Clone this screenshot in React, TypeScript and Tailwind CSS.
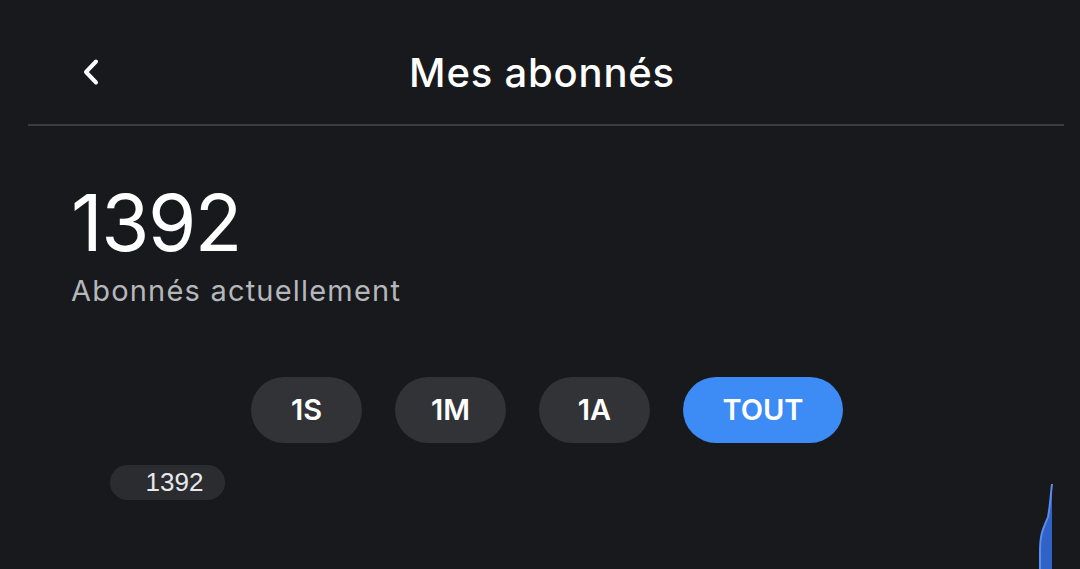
import React from 'react';

const ranges = ['1S', '1M', '1A', 'TOUT'];

export default function App() {
  const active = 'TOUT';
  return (
    <div className="w-[1080px] h-[569px] overflow-hidden bg-[#18191d] text-white font-['Inter',sans-serif] flex flex-col">
      <header className="relative h-[124px] flex items-center justify-center pt-[22px]">
        <button className="absolute left-[77px] top-[55px] w-[28px] h-[34px] flex items-center justify-center">
          <svg width="20" height="28" viewBox="0 0 20 28" fill="none">
            <path d="M15 3.5 L5 14 L15 24.5" stroke="white" strokeWidth="4" strokeLinecap="round" strokeLinejoin="round" />
          </svg>
        </button>
        <h1 className="text-[40px] font-medium tracking-[0.8px] ml-[4px]">Mes abonnés</h1>
      </header>
      <div className="ml-[28px] mr-[16px] h-[2px] bg-[#3a3b3f]" />

      <section className="pl-[71px] pt-[58px]">
        <div className="text-[78px] leading-none font-normal tracking-[-1.5px]">1392</div>
        <div className="mt-[14px] text-[29px] leading-none text-[#b5b7bb] tracking-[1.2px]">Abonnés actuellement</div>
      </section>

      <div className="mt-[72px] flex justify-center gap-[33px] pl-[14px]">
        {ranges.map((r) => (
          <button
            key={r}
            className={
              r === active
                ? 'h-[66px] w-[160px] rounded-full bg-[#3d8bf5] text-[29px] font-semibold text-white'
                : 'h-[66px] w-[111px] rounded-full bg-[#323336] text-[29px] font-semibold text-white'
            }
          >
            {r}
          </button>
        ))}
      </div>

      <div className="relative flex-1 mt-[24px]">
        <div className="ml-[110px] w-[115px] h-[35px] rounded-full bg-[#2b2c30] flex items-center justify-center pl-[14px] -mt-[2px] font-['Liberation_Sans',Arial,sans-serif] text-[26px] text-[#e8e8ea]">
          1392
        </div>
        <svg className="absolute right-[24px] top-[15px]" width="20" height="90" viewBox="0 0 20 90" fill="none">
          <path d="M16 2 L16 90 L4 90 L4 70 C4 50 8 45 12 35 C14 25 15 10 16 2 Z" fill="#2f63c8" />
          <path d="M16 2 C15 10 14 25 12 35 C8 45 4 50 4 70 L4 90" stroke="#5b8cf0" strokeWidth="2" />
        </svg>
      </div>
    </div>
  );
}
